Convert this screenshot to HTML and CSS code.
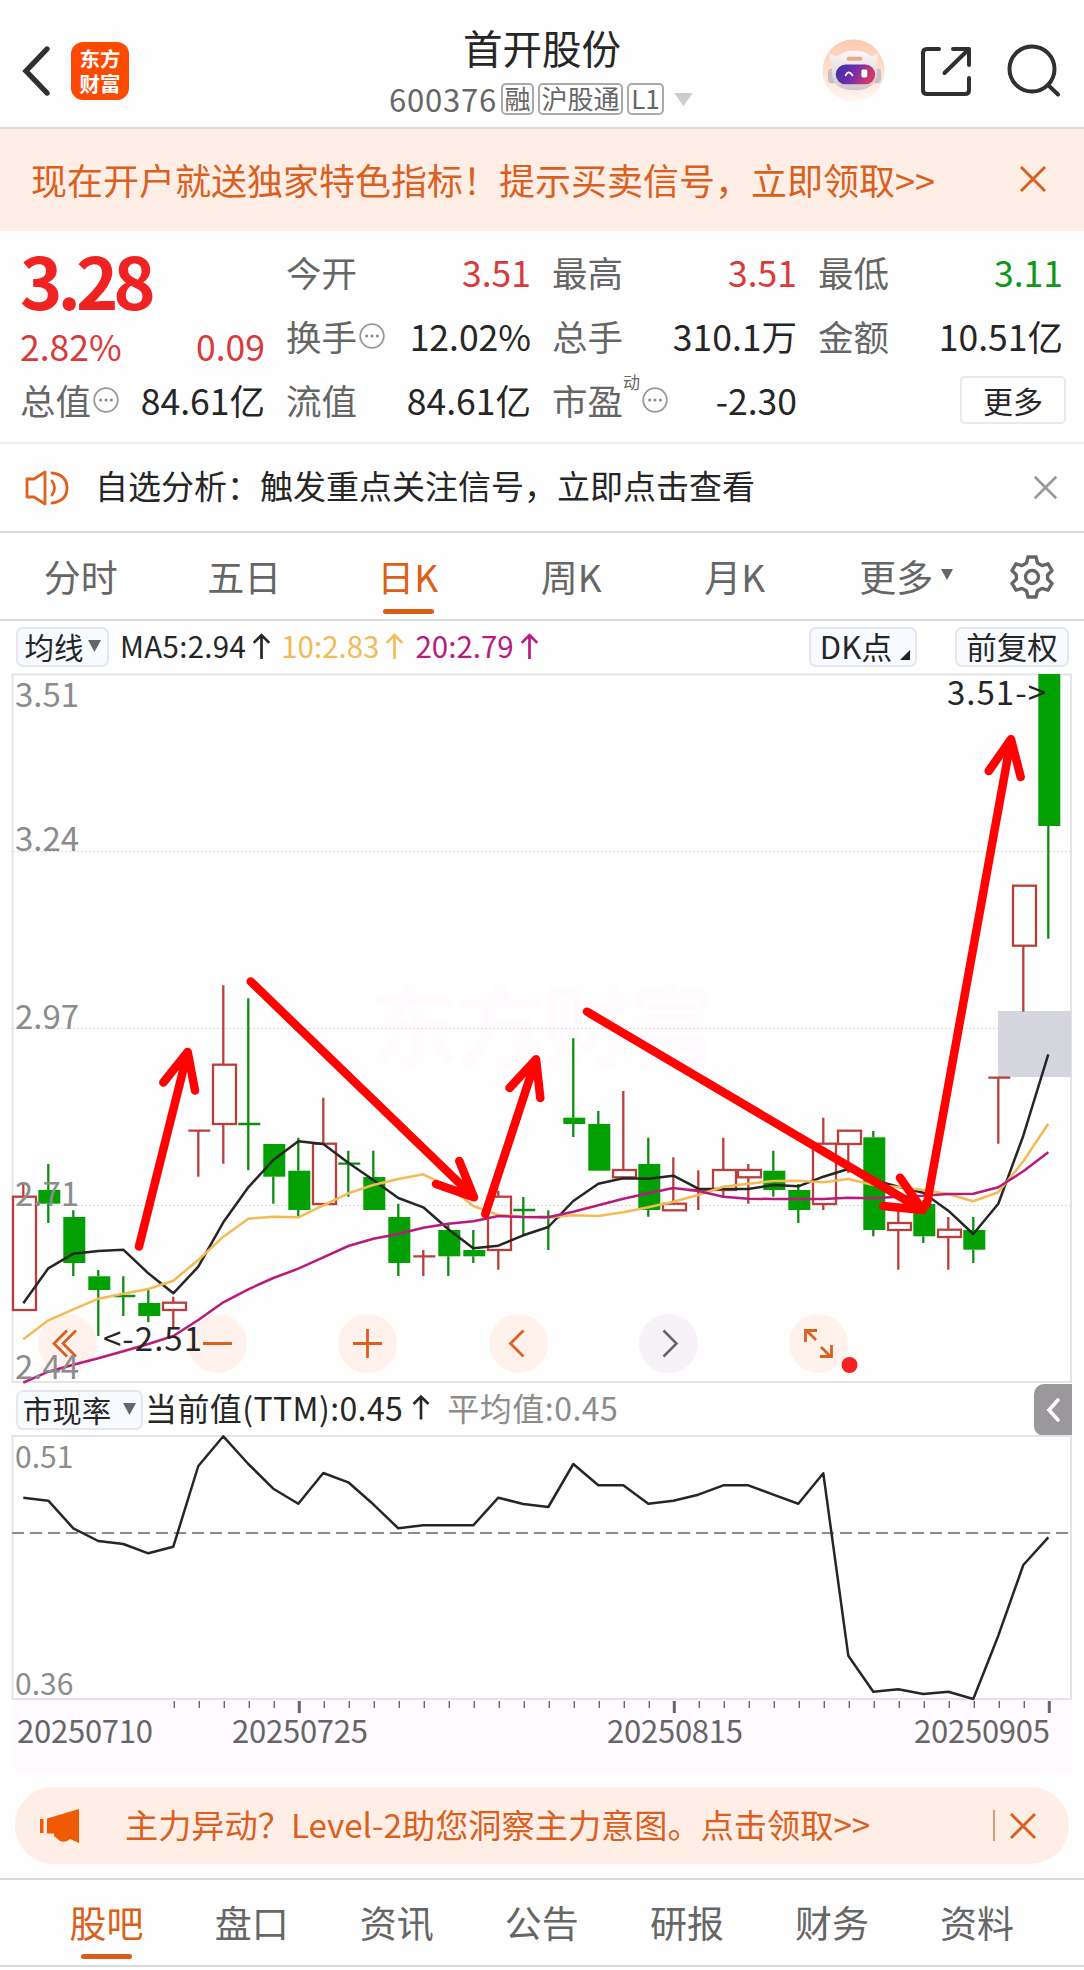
FILE: index.html
```html
<!DOCTYPE html>
<html lang="zh-CN">
<head>
    <meta charset="UTF-8">
    <meta name="viewport" content="width=device-width, initial-scale=1.0">
    <title>首开股份 600376</title>
    <link rel="stylesheet" href="styles.css">
</head>
<body>
    <svg width="0" height="0" class="defs">
        <symbol id="info" viewBox="0 0 26 26">
            <circle cx="13" cy="13" r="11.8" fill="none" stroke="#999" stroke-width="1.8"/>
            <circle cx="7.6" cy="13" r="1.5" fill="#888"/>
            <circle cx="13" cy="13" r="1.5" fill="#888"/>
            <circle cx="18.4" cy="13" r="1.5" fill="#888"/>
        </symbol>
        <symbol id="close" viewBox="0 0 28 28">
            <path d="M2 2 L26 26 M26 2 L2 26" fill="none" stroke="currentColor" stroke-width="3"/>
        </symbol>
    </svg>

    <header class="header">
        <div class="header-left">
            <svg class="back" viewBox="0 0 30 52"><path d="M26 4 L5 26 L26 48" fill="none" stroke="#303030" stroke-width="5.4" stroke-linecap="round"/></svg>
            <div class="logo"><span>东方</span><span>财富</span></div>
        </div>
        <div class="title">
            <h1>首开股份</h1>
            <div class="code">
                <span>600376</span><i class="tag">融</i><i class="tag tag-wide">沪股通</i><i class="tag tag-l1">L1</i>
                <svg class="code-arrow" viewBox="0 0 20 14"><path d="M0 0H20L10 14Z" fill="#ccc"/></svg>
            </div>
        </div>
        <div class="header-right">
            <svg class="robot" viewBox="0 0 64 64">
                <defs>
                    <linearGradient id="halo" x1="0" y1="0" x2="0" y2="1">
                        <stop offset="0" stop-color="#ffc9ae"/>
                        <stop offset="1" stop-color="#fff6f2"/>
                    </linearGradient>
                    <linearGradient id="visor" x1="0" y1="0" x2="1" y2="0.3">
                        <stop offset="0" stop-color="#39319c"/>
                        <stop offset="0.5" stop-color="#6b2fae"/>
                        <stop offset="1" stop-color="#d4386a"/>
                    </linearGradient>
                    <linearGradient id="shell" x1="0" y1="0" x2="0" y2="1">
                        <stop offset="0" stop-color="#fcf9f8"/>
                        <stop offset="1" stop-color="#cfc7cb"/>
                    </linearGradient>
                </defs>
                <circle cx="32" cy="32" r="31.5" fill="url(#halo)"/>
                <path d="M8 14 Q6 23 13 26 L20 17 Q12 19 8 14Z M56 14 Q58 23 52 26 L45 17 Q53 19 56 14Z" fill="#f3eeee"/>
                <rect x="6" y="30" width="9" height="15" rx="4" fill="#c9c0c5"/>
                <rect x="51" y="30" width="9" height="15" rx="4" fill="#c9c0c5"/>
                <path d="M10 33 Q11 12 33 12 Q54 12 56 33 Q56 52 33 52 Q10 52 10 33Z" fill="url(#shell)"/>
                <rect x="25" y="18" width="16" height="4" rx="2" fill="#e3ad87"/>
                <rect x="14" y="26" width="40" height="20" rx="10" fill="url(#visor)"/>
                <path d="M24 37 Q27 31 31 37" fill="none" stroke="#fff" stroke-width="1.8" stroke-linecap="round"/>
                <rect x="40" y="31" width="6" height="8" rx="1.5" fill="#fff"/>
            </svg>
            <svg class="share" viewBox="0 0 50 51" fill="none" stroke="#303030" stroke-width="4" stroke-linecap="round" stroke-linejoin="round">
                <path d="M18 3 H6 Q2 3 2 7 V44 Q2 48 6 48 H44 Q48 48 48 44 V32"/>
                <path d="M32 3 H48 V19 M47 4 L23.5 27"/>
            </svg>
            <svg class="search" viewBox="0 0 54 54" fill="none" stroke="#303030" stroke-width="4" stroke-linecap="round">
                <circle cx="25" cy="25" r="22.5"/>
                <path d="M41 41 L51 50.5"/>
            </svg>
        </div>
    </header>

    <div class="promo">
        <span>现在开户就送独家特色指标！提示买卖信号，立即领取&gt;&gt;</span>
        <svg class="x"><use href="#close"/></svg>
    </div>

    <section class="quote">
        <div class="quote-col main-col">
            <div class="price">3.28</div>
            <div class="row change red"><span>2.82%</span><span>0.09</span></div>
            <div class="row"><label>总值<svg class="info"><use href="#info"/></svg></label><b>84.61亿</b></div>
        </div>
        <div class="quote-col">
            <div class="row"><label>今开</label><b class="red">3.51</b></div>
            <div class="row"><label>换手<svg class="info"><use href="#info"/></svg></label><b>12.02%</b></div>
            <div class="row"><label>流值</label><b>84.61亿</b></div>
        </div>
        <div class="quote-col">
            <div class="row"><label>最高</label><b class="red">3.51</b></div>
            <div class="row"><label>总手</label><b>310.1万</b></div>
            <div class="row"><label>市盈<sup>动</sup><svg class="info"><use href="#info"/></svg></label><b>-2.30</b></div>
        </div>
        <div class="quote-col">
            <div class="row"><label>最低</label><b class="green">3.11</b></div>
            <div class="row"><label>金额</label><b>10.51亿</b></div>
            <div class="row row-end"><button class="more">更多</button></div>
        </div>
    </section>

    <div class="notice">
        <svg class="speaker" viewBox="0 0 44 36" fill="none" stroke="#dd6220" stroke-width="2.8" stroke-linejoin="round" stroke-linecap="round">
            <path d="M2 9 H9 L20 2 V34 L9 27 H2 Z"/>
            <path d="M27 11 Q32 18 27 25 M27 3 Q42 5 42 18 Q42 31 27 33"/>
        </svg>
        <span>自选分析：触发重点关注信号，立即点击查看</span>
        <svg class="x"><use href="#close"/></svg>
    </div>

    <nav class="tabs">
        <a>分时</a>
        <a>五日</a>
        <a class="active">日K</a>
        <a>周K</a>
        <a>月K</a>
        <a class="tab-more">更多<svg class="tri" viewBox="0 0 12 11"><path d="M0 0H12L6 11Z" fill="#666"/></svg></a>
        <svg class="gear" viewBox="0 0 44 44" fill="none" stroke="#666" stroke-width="3.4" stroke-linejoin="round">
            <path d="M18 2 H26 L27.5 8 L32 10.6 L38 8.8 L42 15.6 L37.6 20 V24 L42 28.4 L38 35.2 L32 33.4 L27.5 36 L26 42 H18 L16.5 36 L12 33.4 L6 35.2 L2 28.4 L6.4 24 V20 L2 15.6 L6 8.8 L12 10.6 L16.5 8 Z"/>
            <circle cx="22" cy="22" r="6.5"/>
        </svg>
    </nav>

    <div class="ma-bar">
        <button class="chip chip-ma">均线<svg class="tri" viewBox="0 0 12 11"><path d="M0 0H12L6 11Z" fill="#666"/></svg></button>
        <span class="ma ma5">MA5:2.94<svg class="up" viewBox="0 0 18 26"><path d="M9 25V2M1.5 9.5L9 2L16.5 9.5"/></svg></span>
        <span class="ma ma10">10:2.83<svg class="up" viewBox="0 0 18 26"><path d="M9 25V2M1.5 9.5L9 2L16.5 9.5"/></svg></span>
        <span class="ma ma20">20:2.79<svg class="up" viewBox="0 0 18 26"><path d="M9 25V2M1.5 9.5L9 2L16.5 9.5"/></svg></span>
        <button class="chip chip-dk">DK点<svg class="corner" viewBox="0 0 10 10"><path d="M10 0V10H0Z" fill="#222"/></svg></button>
        <button class="chip chip-fq">前复权</button>
    </div>

    <svg id="kline" class="kline" viewBox="0 672 1084 713">
        <rect x="12.5" y="674.5" width="1058.5" height="707.5" fill="none" stroke="#e4e4e6" stroke-width="2"/>
        <text class="watermark" x="370" y="1059" textLength="346">东方财富</text>
        <path class="grid" d="M13 851.5H1070M13 1028.5H1070M13 1205.5H1070"/>
        <rect x="998" y="1011" width="73" height="66" fill="#d5d5de"/>
        <g id="buttons">
            <g fill="#fff2ed">
                <circle cx="67.5" cy="1343.5" r="29.5"/>
                <circle cx="217.5" cy="1343.5" r="29.5"/>
                <circle cx="367.5" cy="1343.5" r="29.5"/>
                <circle cx="518.5" cy="1343.5" r="29.5"/>
                <circle cx="818.5" cy="1343.5" r="29.5"/>
            </g>
            <circle cx="668.5" cy="1343.5" r="29.5" fill="#f6f2f7"/>
            <g fill="none" stroke="#d9601f" stroke-width="2.8">
                <path d="M67 1330.5L54 1343.5L67 1356.5M76 1330.5L63 1343.5L76 1356.5"/>
                <path d="M203 1343.5H232M353 1343.5H382M367.5 1329V1358"/>
                <path d="M523.5 1330.5L510.5 1343.5L523.5 1356.5"/>
                <path d="M816 1340L806 1330M805.5 1342V1330.5H817M821 1347L831 1357M831.5 1345V1356.5H820"/>
            </g>
            <path d="M663.5 1330.5L676.5 1343.5L663.5 1356.5" fill="none" stroke="#666" stroke-width="2.6"/>
            <circle cx="849.5" cy="1365" r="8" fill="#f52222"/>
        </g>
        <g id="candles"></g>
        <g id="averages"></g>
        <g class="axis">
            <text x="15" y="707">3.51</text>
            <text x="15" y="851">3.24</text>
            <text x="15" y="1029">2.97</text>
            <text x="15" y="1206">2.71</text>
            <text x="15" y="1379">2.44</text>
        </g>
        <g class="mark">
            <text x="103" y="1351" textLength="99">&lt;-2.51</text>
            <text x="947" y="705" textLength="99">3.51-&gt;</text>
        </g>
        <!-- trend arrows -->
        <g class="arrows">
            <path d="M139 1246.5L187.7 1052M163.3 1082.5L187.7 1052L195 1090.5"/>
            <path d="M250.7 981.5L474 1197.3M436 1184L474 1197.3L459.3 1161"/>
            <path d="M485.3 1214L536 1059.3M509.5 1088L536 1059.3L540.3 1098"/>
            <path d="M587 1011.7L922.7 1210M883.3 1206L922.7 1210L900 1177.7"/>
            <path d="M926.7 1205L1011 739.3M988.7 771L1011 739.3L1020.7 777"/>
        </g>
    </svg>

    <div class="ttm-bar">
        <button class="chip chip-ttm">市现率<svg class="tri" viewBox="0 0 12 11"><path d="M0 0H12L6 11Z" fill="#666"/></svg></button>
        <span class="ttm-now">当前值(TTM):0.45<svg class="up" viewBox="0 0 18 26"><path d="M9 25V2M1.5 9.5L9 2L16.5 9.5"/></svg></span>
        <span class="ttm-avg">平均值:0.45</span>
        <button class="collapse"><svg viewBox="0 0 14 24"><path d="M12 2L3 12L12 22" fill="none" stroke="#fff" stroke-width="3.6" stroke-linecap="round"/></svg></button>
    </div>

    <svg id="ttm" class="ttm" viewBox="0 1435 1084 337">
        <rect x="12" y="1700" width="1060" height="72" fill="#fefaff"/>
        <rect x="12.5" y="1436" width="1058.5" height="263" fill="#fff" stroke="#e4e4e6" stroke-width="2"/>
        <path d="M12 1533H1071" stroke="#8c8c8c" stroke-width="2.2" stroke-dasharray="12 6"/>
        <g id="ticks"></g>
        <g id="ttm-line"></g>
        <g class="axis-small">
            <text x="15" y="1468">0.51</text>
            <text x="15" y="1695">0.36</text>
        </g>
        <g class="dates">
            <text x="17" y="1742.5" textLength="136">20250710</text>
            <text x="232" y="1742.5" textLength="136">20250725</text>
            <text x="607" y="1742.5" textLength="136">20250815</text>
            <text x="914" y="1742.5" textLength="136">20250905</text>
        </g>
    </svg>

    <div class="level2">
        <svg class="horn" viewBox="0 0 40 34"><path d="M0 10H3.500V24H0ZM7 9.500L39 0V34L30 30Q26 34 20 32L14 27V24.500H7Z" fill="#f05a05"/></svg>
        <span>主力异动？Level-2助您洞察主力意图。点击领取&gt;&gt;</span>
        <i class="divider"></i>
        <svg class="x"><use href="#close"/></svg>
    </div>

    <nav class="bottom-tabs">
        <a class="active">股吧</a>
        <a>盘口</a>
        <a>资讯</a>
        <a>公告</a>
        <a>研报</a>
        <a>财务</a>
        <a>资料</a>
    </nav>

    <script src="script.js"></script>
</body>
</html>
```
FILE: styles.css
```css
* {
    box-sizing: border-box;
}
body {
    margin: 0;
    width: 1084px;
    height: 1970px;
    overflow: hidden;
    background: #fefefe;
    color: #262626;
    font-family: "Noto Sans CJK SC", "Noto Sans", sans-serif;
    line-height: 1;
}
svg {
    display: block;
    flex: none;
}
i {
    font-style: normal;
}
button {
    font-family: inherit;
    color: inherit;
    padding: 0;
}
.defs {
    display: none;
}
.red {
    color: #d93a3a !important;
}
.green {
    color: #109618 !important;
}

/* header */
.header {
    display: grid;
    grid-template-columns: 300px 1fr 300px;
    height: 129px;
    border-bottom: 2px solid #dcdbe1;
}
.header-left {
    display: flex;
    align-items: flex-start;
    padding: 42px 0 0 21px;
}
.back {
    width: 30px;
    height: 52px;
    margin-top: 3px;
}
.logo {
    width: 58px;
    height: 58px;
    margin-left: 20px;
    padding-top: 4px;
    border-radius: 12px;
    background: #fc4a05;
    color: #fff;
    font-size: 20.5px;
    font-weight: 700;
    text-align: center;
}
.logo span {
    display: block;
    height: 24.500px;
    line-height: 24.500px;
}
.title {
    display: flex;
    flex-direction: column;
    align-items: center;
}
.title h1 {
    margin: 26px 0 0;
    font-size: 39.500px;
    font-weight: 400;
    line-height: 42px;
}
.code {
    display: flex;
    align-items: center;
    margin: 14px 0 0 -2px;
    height: 34px;
    color: #666;
    font-size: 31px;
    white-space: nowrap;
}
.code > span {
    width: 112px;
    margin-top: -2px;
    letter-spacing: 0.8px;
}
.tag {
    width: 33px;
    height: 32px;
    margin-right: 4px;
    border: 2px solid #aaa;
    border-radius: 5px;
    font-size: 26px;
    line-height: 26px;
    text-align: center;
}
.tag-wide {
    width: 85px;
}
.tag-l1 {
    width: 37px;
}
.code-arrow {
    width: 19px;
    height: 13px;
    margin-left: 6px;
}
.header-right {
    display: flex;
    align-items: flex-start;
    padding-left: 38px;
}
.robot {
    width: 63px;
    height: 63px;
    margin-top: 39px;
}
.share {
    width: 50px;
    height: 51px;
    margin: 46px 0 0 36px;
}
.search {
    width: 54px;
    height: 54px;
    margin: 44px 0 0 36px;
}

/* open account banner */
.promo {
    display: flex;
    align-items: center;
    justify-content: space-between;
    height: 102px;
    padding: 0 37px 0 31px;
    background: #ffeee6;
    color: #d9601f;
    font-size: 36px;
}
.promo span {
    margin-top: -3px;
}
.promo .x {
    width: 28px;
    height: 28px;
    margin-top: -2px;
}

/* quote */
.quote {
    display: grid;
    grid-template-columns: repeat(4, 245px);
    column-gap: 21px;
    height: 213px;
    padding: 9px 0 0 20px;
    border-bottom: 2px solid #ededee;
}
.row {
    display: flex;
    align-items: center;
    justify-content: space-between;
    height: 64px;
    font-size: 35.500px;
    white-space: nowrap;
}
.row label {
    display: flex;
    align-items: center;
    color: #666;
}
.row b {
    font-weight: 400;
    color: #262626;
}
.row-end {
    justify-content: flex-end;
}
.info {
    width: 26px;
    height: 26px;
    margin: 0 0 0 2px;
}
.row sup {
    align-self: flex-start;
    margin-top: -9px;
    font-size: 17px;
    line-height: 1;
}
.price {
    height: 75px;
    color: #f02323;
    font-size: 72px;
    font-weight: 700;
    letter-spacing: -5px;
    line-height: 77px;
}
.change {
    height: 53px;
    padding-top: 8px;
}
.more {
    width: 106px;
    height: 48px;
    margin-right: -3px;
    padding-bottom: 3px;
    border: 2px solid #e9e9ec;
    border-radius: 5px;
    background: #fff;
    font-size: 30px;
}

/* analysis notice */
.notice {
    display: flex;
    align-items: center;
    height: 89px;
    padding: 0 26px 0 25px;
    border-bottom: 2px solid #d9d9da;
    font-size: 33px;
}
.notice span {
    flex: 1;
    margin: -4px 0 0 26px;
}
.notice .x {
    width: 25px;
    height: 25px;
    color: #999;
}
.speaker {
    width: 44px;
    height: 36px;
}

/* period tabs */
.tabs {
    display: flex;
    height: 88px;
    border-bottom: 2px solid #d9d9da;
    color: #666;
    font-size: 37px;
}
.tabs a {
    position: relative;
    display: flex;
    align-items: center;
    justify-content: center;
    width: 163.5px;
    height: 88px;
    padding: 0 2px 2px 0;
}
.tabs .tri {
    width: 12px;
    height: 11px;
    margin: -3px 0 0 8px;
}
.tabs .tab-more {
    padding-left: 16px;
}
.active {
    color: #dc5e17;
}
.active::after {
    content: "";
    position: absolute;
    bottom: 7px;
    left: 50%;
    width: 51px;
    height: 5px;
    margin-left: -26px;
    border-radius: 3px;
    background: #dd5d15;
}
.gear {
    width: 44px;
    height: 44px;
    margin: 22px 0 0 29px;
}

/* chart toolbars */
.ma-bar {
    display: flex;
    align-items: center;
    height: 51px;
    padding: 0 15px 0 16px;
    font-size: 29.500px;
}
.chip {
    display: flex;
    align-items: center;
    justify-content: center;
    height: 40px;
    padding-bottom: 2px;
    border: 2px solid #e6e7ee;
    border-radius: 7px;
    background: #f7faff;
    font-size: 29.500px;
}
.chip .tri {
    width: 13px;
    height: 12px;
}
.chip-ma {
    width: 93px;
}
.chip-ma .tri {
    margin-left: 4px;
}
.chip-dk {
    width: 108px;
    margin-left: auto;
    font-size: 31px;
}
.corner {
    width: 10px;
    height: 10px;
    margin: 18px -4px 0 8px;
}
.chip-fq {
    width: 114px;
    margin-left: 38px;
    font-size: 30.500px;
}
.ma {
    display: flex;
    align-items: center;
    margin: -1px 0 0 11px;
}
.ma5 {
    letter-spacing: 0.3px;
}
.up {
    width: 19px;
    height: 27px;
    margin-left: 6px;
    fill: none;
    stroke: currentColor;
    stroke-width: 2.6;
}
.ma10 {
    color: #f2bb55;
    margin-left: 10px;
}
.ma20 {
    color: #b81b7a;
    margin-left: 11px;
}
.ttm-bar {
    display: flex;
    align-items: center;
    height: 50px;
    padding: 0 12px 0 16px;
    font-size: 31px;
}
.chip-ttm {
    width: 127px;
}
.chip-ttm .tri {
    margin-left: 12px;
}
.ttm-now {
    display: flex;
    align-items: center;
    margin: -6px 0 0 2px;
    font-size: 32px;
    letter-spacing: 0.4px;
}
.ttm-now .up {
    width: 18px;
    height: 29px;
    margin-left: 9px;
}
.ttm-avg {
    margin: -6px 0 0 17px;
    color: #8c8c8c;
    font-size: 32px;
    letter-spacing: 0.5px;
}
.collapse {
    display: flex;
    align-items: center;
    justify-content: center;
    width: 38px;
    height: 52px;
    margin-left: auto;
    border: 0;
    border-radius: 10px 0 0 10px;
    background: #9b989b;
}
.collapse svg {
    width: 14px;
    height: 24px;
}

/* charts */
.kline {
    width: 1084px;
    height: 713px;
    overflow: visible;
}
.ttm {
    width: 1084px;
    height: 337px;
    overflow: visible;
}
.grid {
    stroke: #d9d9d9;
    stroke-width: 1;
    stroke-dasharray: 2 2;
}
.watermark {
    fill: #fefafe;
    font-size: 88px;
    font-weight: 700;
}
.axis {
    fill: #8c8c8c;
    font-size: 33px;
}
.axis-small {
    fill: #8c8c8c;
    font-size: 30px;
}
.mark {
    fill: #262626;
    font-size: 33px;
}
.dates {
    fill: #666;
    font-size: 31px;
}
.up-candle {
    fill: none;
    stroke: #b8403c;
    stroke-width: 2.3;
}
.down-candle {
    fill: #02a002;
    stroke: #108c12;
    stroke-width: 2.3;
}
.down-candle rect {
    stroke: none;
}
.line {
    fill: none;
    stroke: #262626;
    stroke-width: 2.5;
    stroke-linejoin: round;
}
.line10 {
    stroke: #f2bb55;
}
.line20 {
    stroke: #b81b7a;
}
.arrows {
    fill: none;
    stroke: #ff0303;
    stroke-width: 8.5;
    stroke-linecap: round;
    stroke-linejoin: round;
}

/* bottom banner */
.level2 {
    display: flex;
    align-items: center;
    height: 77px;
    margin: 15px 15px 14px;
    padding: 0 32px 0 25px;
    border-radius: 38px;
    background: #ffeee6;
    color: #d9601f;
    font-size: 33.200px;
}
.level2 span {
    flex: 1;
    margin: -4px 0 0 45px;
}
.horn {
    width: 40px;
    height: 34px;
}
.divider {
    width: 2px;
    height: 31px;
    margin-right: 14px;
    background: #d39a7c;
}
.level2 .x {
    width: 28px;
    height: 28px;
}
.bottom-tabs {
    display: flex;
    height: 89px;
    padding: 0 34px;
    border-top: 2px solid #d9d9da;
    border-bottom: 2px solid #d9d9da;
    color: #666;
    font-size: 37px;
}
.bottom-tabs a {
    position: relative;
    display: flex;
    align-items: center;
    justify-content: center;
    width: 145.1px;
    padding-bottom: 1px;
}
.bottom-tabs .active::after {
    bottom: 6px;
}
```
FILE: script.js
```js
// one slot every 25px, the first one is centred on x = 23
const slotX = i => 23.3 + i * 25;

// [up or down, top of wick, top of body, bottom of body, bottom of wick]
const candles = [
    ['u', 1184, 1196.7, 1310, 1310], ['d', 1164, 1190, 1203.7, 1223], ['d', 1210.3, 1217, 1263, 1276],
    ['d', 1270, 1276.3, 1290, 1336], ['d', 1276.3, 1296, 1296, 1316], ['d', 1290, 1303, 1316, 1322.3],
    ['u', 1296.7, 1302.7, 1310, 1328], ['u', 1130.7, 1130.7, 1130.7, 1176.7], ['u', 985.3, 1064.7, 1124, 1163.7],
    ['d', 998.3, 1124, 1124, 1170.3], ['d', 1144, 1144, 1176.7, 1203.7], ['d', 1137.7, 1170.7, 1210, 1216.7],
    ['u', 1097.7, 1143.7, 1204, 1204], ['d', 1150.7, 1163.7, 1163.7, 1196.7], ['d', 1150.7, 1177, 1210, 1210],
    ['d', 1203.7, 1217, 1263, 1276], ['u', 1250, 1256.3, 1256.3, 1276], ['d', 1225, 1230, 1256.3, 1276],
    ['d', 1230, 1250, 1256.3, 1263], ['u', 1190.7, 1196.7, 1250, 1269.7], ['d', 1197, 1210, 1210, 1235],
    ['d', 1210.3, 1217, 1217, 1250], ['d', 1038.3, 1117.7, 1124, 1137], ['d', 1111, 1124, 1170.7, 1170.7],
    ['u', 1091, 1170, 1177.3, 1177.3], ['d', 1137.7, 1164, 1210, 1216.7], ['u', 1157.3, 1203.7, 1210.3, 1210.3],
    ['u', 1170.3, 1190, 1190, 1210], ['u', 1137.7, 1170, 1190, 1196], ['u', 1164, 1170, 1177.3, 1203.7],
    ['d', 1150.7, 1170.7, 1190, 1196.7], ['d', 1184, 1190, 1210, 1223], ['u', 1117.7, 1143.7, 1204, 1210],
    ['u', 1130.7, 1130.7, 1144, 1173], ['d', 1131, 1137.3, 1230, 1236.3], ['u', 1204, 1223, 1230, 1269.7],
    ['d', 1200, 1204, 1236.3, 1243], ['u', 1217, 1229.7, 1237, 1269.7], ['d', 1217, 1230, 1249.7, 1263],
    ['u', 1077.7, 1077.7, 1077.7, 1143.7], ['u', 885.7, 885.7, 945.7, 1011.7], ['d', 674, 674, 826, 938.7]
];

const ma20 = [1382.7, 1371.7, 1364.7, 1358.3, 1351.3, 1344, 1336, 1320, 1302.3, 1289.3, 1278, 1268.7, 1257.3, 1246,
    1238.7, 1234, 1227.7, 1223.7, 1221.3, 1216, 1217, 1217.3, 1211.7, 1205.3, 1198.7, 1193.3, 1188, 1191,
    1196.7, 1198.7, 1199, 1199, 1199, 1197.7, 1198.3, 1196.7, 1195.7, 1194, 1193.7, 1187.3, 1171.3, 1152.3];
const ma10 = [1339.3, 1320.3, 1309.3, 1298.7, 1293.7, 1289, 1280.7, 1260, 1236.7, 1218.7, 1216.7, 1217.3, 1205.3, 1193.3,
    1185, 1179, 1174.3, 1186.7, 1206, 1215, 1216.7, 1217.3, 1215.3, 1216, 1212.3, 1207.3, 1201.7, 1195,
    1186.7, 1183.7, 1181, 1180.7, 1182.3, 1179, 1185, 1187, 1190, 1194, 1201.3, 1192.3, 1161.3, 1123.7];
const ma5 = [1303.3, 1268.3, 1253.7, 1251, 1249.7, 1273.3, 1293.3, 1266.7, 1222.3, 1187.3, 1160, 1141.3, 1144, 1162.7,
    1180, 1198, 1207.3, 1229.3, 1248.3, 1245.7, 1235.3, 1227, 1201, 1183.7, 1178.3, 1178.7, 1175.7, 1188.7,
    1189, 1189, 1185, 1186.3, 1176.7, 1169, 1180, 1186.7, 1192.7, 1210.7, 1234, 1203.7, 1135.7, 1054.3];
const ttm = [1497.7, 1500.7, 1528.3, 1541, 1544, 1553.3, 1546.7, 1466, 1436.3, 1464, 1488.7, 1503.7, 1473, 1482.3,
    1504.3, 1528.3, 1525.3, 1525.3, 1525.3, 1497.7, 1504, 1507, 1464, 1485.3, 1485.3, 1503.7, 1500.7, 1494.7,
    1485.3, 1485.3, 1494.7, 1503.7, 1473.3, 1655.7, 1691.7, 1689.3, 1694, 1691.7, 1699, 1635.7, 1565, 1537.3];

function drawCandle(c, i) {
    const [type, high, top, bottom, low] = c;
    const x = slotX(i);
    const wick = `M${x} ${high}V${top}M${x} ${bottom}V${low}`;
    if (top === bottom) {
        const cls = type === 'u' ? 'up-candle' : 'down-candle';
        return `<path class="${cls}" d="${wick}M${x - 10} ${top}H${x + 12}"/>`;
    }
    if (type === 'u') {
        return `<g class="up-candle"><path d="${wick}"/><rect x="${x - 10.3}" y="${top}" width="23" height="${bottom - top}"/></g>`;
    }
    return `<g class="down-candle"><path d="${wick}"/><rect x="${x - 10}" y="${top}" width="22" height="${bottom - top}"/></g>`;
}

function drawLine(values, cls) {
    const points = values.map((y, i) => slotX(i) + ',' + y).join(' ');
    return `<polyline class="line ${cls}" points="${points}"/>`;
}

document.getElementById('candles').innerHTML = candles.map(drawCandle).join('');
document.getElementById('averages').innerHTML =
    drawLine(ma5, 'line5') + drawLine(ma10, 'line10') + drawLine(ma20, 'line20');
document.getElementById('ttm-line').innerHTML = drawLine(ttm, 'line-ttm');

let ticks = '';
for (let i = 6; i < 42; i++) {
    const major = i % 15 === 11;
    ticks += `<path d="M${slotX(i) + 1} 1701V${major ? 1713 : 1708}" stroke="#666" stroke-width="${major ? 3 : 1.4}"/>`;
}
document.getElementById('ticks').innerHTML = ticks;
```
